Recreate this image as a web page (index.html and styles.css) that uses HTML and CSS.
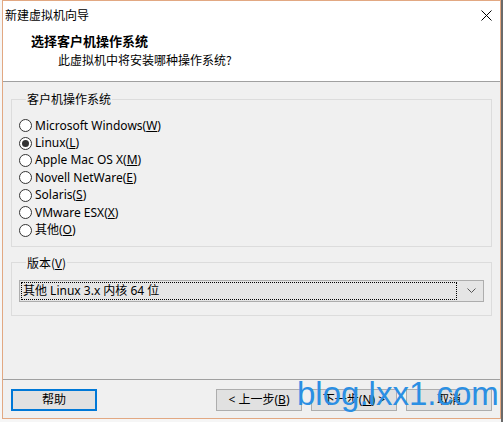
FILE: index.html
```html
<!DOCTYPE html>
<html lang="zh-CN">
<head>
<meta charset="utf-8">
<title>新建虚拟机向导</title>
<link rel="stylesheet" href="styles.css">
</head>
<body>
<div class="window">
  <div class="titlebar">
    <span class="title">新建虚拟机向导</span>
    <svg class="close" width="11" height="11" viewBox="0 0 11 11"><path d="M0.5 0.5 L10.5 10.5 M10.5 0.5 L0.5 10.5" stroke="#000" stroke-width="1" fill="none"/></svg>
  </div>
  <div class="header">
    <div class="h-title">选择客户机操作系统</div>
    <div class="h-sub">此虚拟机中将安装哪种操作系统?</div>
  </div>
  <div class="content">
    <fieldset class="group group-os">
      <legend>客户机操作系统</legend>
      <div class="radio"><span class="dot"></span><span class="lbl">Microsoft Windows(<u>W</u>)</span></div>
      <div class="radio checked"><span class="dot"></span><span class="lbl">Linux(<u>L</u>)</span></div>
      <div class="radio"><span class="dot"></span><span class="lbl">Apple Mac OS X(<u>M</u>)</span></div>
      <div class="radio"><span class="dot"></span><span class="lbl">Novell NetWare(<u>E</u>)</span></div>
      <div class="radio"><span class="dot"></span><span class="lbl">Solaris(<u>S</u>)</span></div>
      <div class="radio"><span class="dot"></span><span class="lbl">VMware ESX(<u>X</u>)</span></div>
      <div class="radio"><span class="dot"></span><span class="lbl">其他(<u>O</u>)</span></div>
    </fieldset>
    <fieldset class="group group-ver">
      <legend>版本(<u>V</u>)</legend>
      <div class="combo">
        <div class="combo-val">其他 Linux 3.x 内核 64 位</div>
        <svg class="chev" width="9" height="5" viewBox="0 0 9 5"><path d="M0.5 0.5 L4.5 4.5 L8.5 0.5" stroke="#555" stroke-width="1" fill="none"/></svg>
      </div>
    </fieldset>
  </div>
  <div class="footer">
    <button class="btn btn-focus">帮助</button>
    <div class="spacer"></div>
    <button class="btn">&lt; 上一步(<u>B</u>)</button>
    <button class="btn">下一步(<u>N</u>) &gt;</button>
    <button class="btn">取消</button>
    <div class="watermark">blog.lxx1.com</div>
  </div>
</div>
</body>
</html>
```

FILE: styles.css
```css
html, body {
  margin: 0;
  padding: 0;
}
body {
  width: 503px;
  height: 422px;
  overflow: hidden;
  background: linear-gradient(to right, #f6f6f6 0, #f6f6f6 501px, #6a6a6a 501px);
  font-family: "Noto Sans", "Noto Sans CJK SC", sans-serif;
  font-size: 12px;
  color: #000;
}
.window {
  box-sizing: border-box;
  margin-left: 2px;
  width: 499px;
  height: 419px;
  border: 1px solid #e2a882;
  background: #f0f0f0;
  display: flex;
  flex-direction: column;
  position: relative;
}
.titlebar {
  height: 30px;
  background: #fff;
  display: flex;
  align-items: center;
  justify-content: space-between;
  padding: 0 8px 2px 2px;
  box-sizing: border-box;
}
.title {
  font-family: "Noto Sans CJK SC", sans-serif;
  font-size: 12px;
  line-height: 16px;
}
.close {
  display: block;
}
.header {
  height: 50px;
  background: #fff;
  border-bottom: 1px solid #a0a0a0;
  padding-left: 28px;
}
.h-title {
  font-family: "Noto Sans CJK SC", sans-serif;
  font-weight: bold;
  font-size: 13px;
  line-height: 18px;
  margin-top: 1px;
}
.h-sub {
  font-family: "Noto Sans CJK SC", sans-serif;
  font-size: 12px;
  line-height: 16px;
  padding-left: 27px;
  margin-top: 2px;
}
.content {
  height: 297px;
  padding: 0 8px;
  box-sizing: border-box;
  overflow: hidden;
}
.group {
  margin: 0;
  border: 1px solid #dcdcdc;
  padding: 0 7px;
  min-width: 0;
}
.group legend {
  margin-left: 7px;
  padding: 0 1px;
  line-height: 16px;
  font-family: "Noto Sans CJK SC", sans-serif;
}
.group-os {
  margin-top: 9px;
  padding-top: 10px;
  padding-bottom: 7px;
}
.group-ver {
  margin-top: 8px;
  padding-top: 9px;
  padding-bottom: 13px;
}
.radio {
  height: 17.4px;
  display: flex;
  align-items: center;
  gap: 3px;
  white-space: nowrap;
}
.lbl {
  line-height: 16px;
}
.dot {
  box-sizing: border-box;
  width: 13px;
  height: 13px;
  border: 1px solid #333;
  border-radius: 50%;
  background: #fff;
  display: flex;
  align-items: center;
  justify-content: center;
  flex: none;
}
.checked .dot::after {
  content: "";
  width: 7px;
  height: 7px;
  border-radius: 50%;
  background: #333;
}
.combo {
  box-sizing: border-box;
  height: 22px;
  border: 1px solid #adadad;
  background: #e5e5e5;
  display: flex;
  align-items: center;
  padding: 1px 7px 1px 1px;
}
.combo-val {
  flex: 1;
  box-sizing: border-box;
  height: 18px;
  line-height: 16px;
  border: 1px dotted #000;
  padding-left: 1px;
  margin-right: 10px;
  white-space: nowrap;
}
.chev {
  display: block;
}
.footer {
  flex: 1;
  border-top: 1px solid #a0a0a0;
  display: flex;
  align-items: flex-start;
  gap: 9px;
  padding: 9px 8px 0 8px;
  position: relative;
}
.spacer {
  flex: 1;
}
.btn {
  box-sizing: border-box;
  width: 86px;
  height: 22px;
  border: 1px solid #adadad;
  background: #e1e1e1;
  font-family: "Noto Sans", "Noto Sans CJK SC", sans-serif;
  font-size: 12px;
  color: #000;
  padding: 0;
  line-height: 18px;
}
.btn-focus {
  border: 2px solid #0078d7;
}
.watermark {
  position: absolute;
  left: 294px;
  top: -6px;
  font-family: "Liberation Sans", Arial, sans-serif;
  font-size: 33px;
  line-height: 40px;
  color: #2b8fe3;
  white-space: nowrap;
  pointer-events: none;
}
```
